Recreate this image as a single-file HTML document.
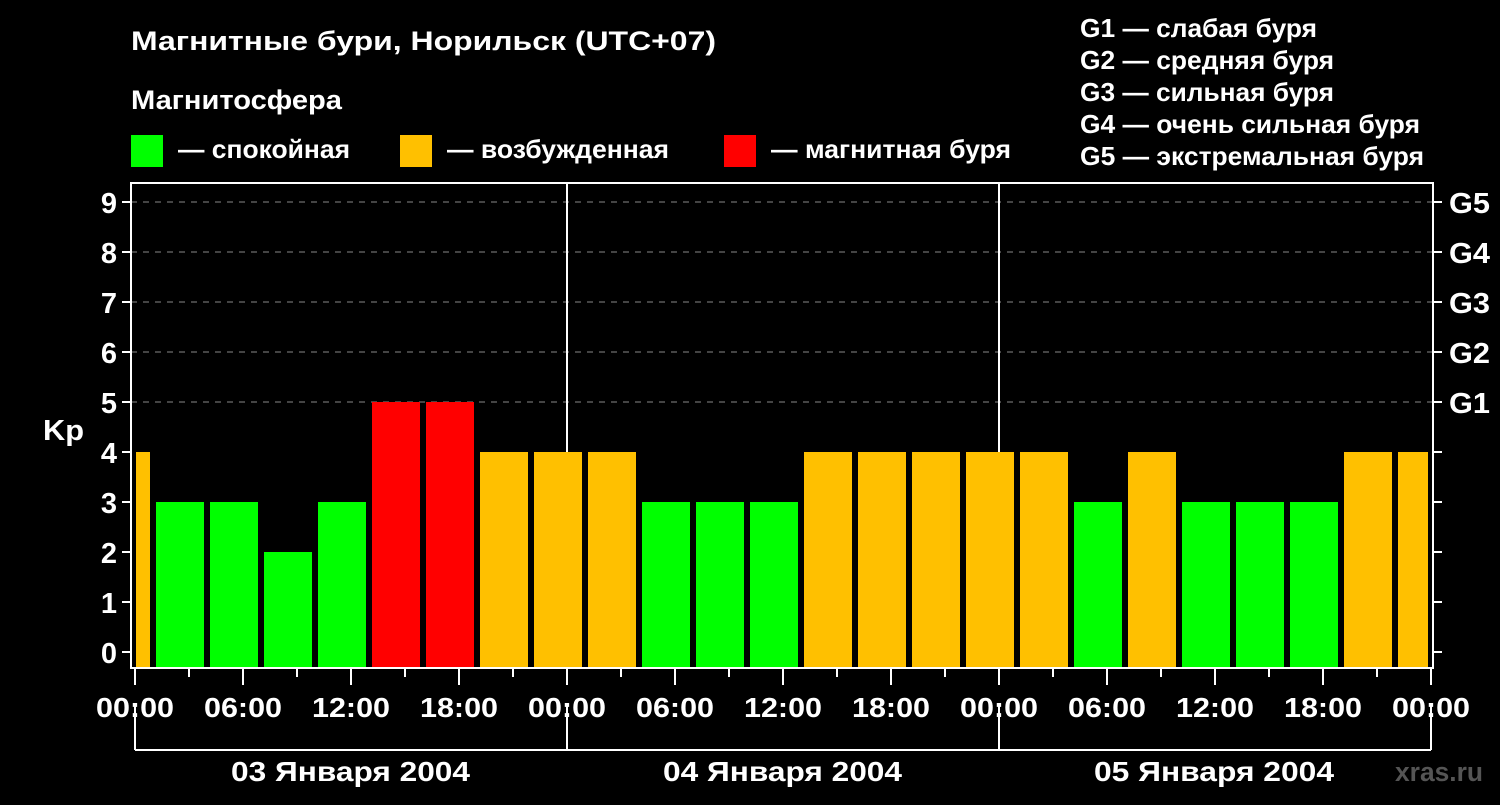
<!DOCTYPE html><html><head><meta charset="utf-8"><style>body{margin:0;background:#000;width:1500px;height:800px;overflow:hidden}</style></head><body>
<svg width="1500" height="800" xmlns="http://www.w3.org/2000/svg" font-family="Liberation Sans, DejaVu Sans, sans-serif" font-weight="bold" fill="#fff">
<rect width="1500" height="800" fill="#000"/>
<text x="131" y="50" font-size="27" textLength="585" lengthAdjust="spacingAndGlyphs">Магнитные бури, Норильск (UTC+07)</text>
<text x="131" y="109" font-size="27" textLength="211" lengthAdjust="spacingAndGlyphs">Магнитосфера</text>
<rect x="131" y="135" width="32" height="32" fill="#00ff00"/><text x="178" y="158" font-size="26" textLength="172" lengthAdjust="spacingAndGlyphs">— спокойная</text>
<rect x="400" y="135" width="32" height="32" fill="#ffc000"/><text x="447" y="158" font-size="26" textLength="222" lengthAdjust="spacingAndGlyphs">— возбужденная</text>
<rect x="724" y="135" width="32" height="32" fill="#ff0000"/><text x="771" y="158" font-size="26" textLength="240" lengthAdjust="spacingAndGlyphs">— магнитная буря</text>
<g font-size="26"><text x="1080" y="37" textLength="237" lengthAdjust="spacingAndGlyphs">G1 — слабая буря</text><text x="1080" y="69" textLength="254" lengthAdjust="spacingAndGlyphs">G2 — средняя буря</text><text x="1080" y="101" textLength="254" lengthAdjust="spacingAndGlyphs">G3 — сильная буря</text><text x="1080" y="133" textLength="340" lengthAdjust="spacingAndGlyphs">G4 — очень сильная буря</text><text x="1080" y="165" textLength="344" lengthAdjust="spacingAndGlyphs">G5 — экстремальная буря</text></g>
<g stroke="#888" stroke-width="1" stroke-dasharray="6,6"><line x1="131" y1="202" x2="1433" y2="202"/><line x1="131" y1="252" x2="1433" y2="252"/><line x1="131" y1="302" x2="1433" y2="302"/><line x1="131" y1="352" x2="1433" y2="352"/><line x1="131" y1="402" x2="1433" y2="402"/></g>
<g stroke="#fff" stroke-width="2"><line x1="567" y1="183" x2="567" y2="668"/><line x1="999" y1="183" x2="999" y2="668"/></g>
<g id="bars"></g>
<g stroke="#fff" stroke-width="2" fill="none"><rect x="131" y="183" width="1302" height="485"/>
<path id="tk" d=""/></g>
<g font-size="29" text-anchor="end" id="yl"></g>
<g font-size="29" id="gl"><text x="1449" y="213" textLength="41" lengthAdjust="spacingAndGlyphs">G5</text><text x="1449" y="263" textLength="41" lengthAdjust="spacingAndGlyphs">G4</text><text x="1449" y="313" textLength="41" lengthAdjust="spacingAndGlyphs">G3</text><text x="1449" y="363" textLength="41" lengthAdjust="spacingAndGlyphs">G2</text><text x="1449" y="413" textLength="41" lengthAdjust="spacingAndGlyphs">G1</text></g>
<text x="43" y="440" font-size="29" textLength="41" lengthAdjust="spacingAndGlyphs">Kp</text>
<g font-size="28" id="xl"></g>
<g font-size="28"><text x="231" y="781" textLength="239" lengthAdjust="spacingAndGlyphs">03 Января 2004</text><text x="663" y="781" textLength="239" lengthAdjust="spacingAndGlyphs">04 Января 2004</text><text x="1094" y="781" textLength="240" lengthAdjust="spacingAndGlyphs">05 Января 2004</text></g>
<text x="1395" y="781" font-size="27" fill="#555" textLength="88" lengthAdjust="spacingAndGlyphs">xras.ru</text>
</svg>
<script>
var ns="http://www.w3.org/2000/svg";
function el(t,a,p,txt){var e=document.createElementNS(ns,t);for(var k in a)e.setAttribute(k,a[k]);if(txt!=null)e.textContent=txt;document.getElementById(p).appendChild(e);return e;}
var c={2:"#00ff00",3:"#00ff00",4:"#ffc000",5:"#ff0000"};
el("rect",{x:136,y:452,width:14,height:216,fill:c[4]},"bars");
var v=[3,3,2,3,5,5,4,4,4,3,3,3,4,4,4,4,4,3,4,3,3,3,4,4];
v.forEach(function(k,i){var x=156+54*i,w=i==23?30:48;el("rect",{x:x,y:652-50*k,width:w,height:668-652+50*k,fill:c[k]},"bars");});
var d="";
for(var i=0;i<=9;i++){var y=652-50*i;d+="M122 "+y+"H131M1433 "+y+"H1442";el("text",{x:117,y:y+11},"yl",""+i);}
for(var i=0;i<=24;i++){var x=135+54*i;d+="M"+x+" 668V"+(i%2?677:685);}
[135,567,999,1431].forEach(function(x){d+="M"+x+" 705V750";});
d+="M135 750H1431";
document.getElementById("tk").setAttribute("d",d);
var L=["00:00","06:00","12:00","18:00"];
for(var i=0;i<=12;i++)el("text",{x:135+108*i-39,y:717,textLength:78,lengthAdjust:"spacingAndGlyphs"},"xl",L[i%4]);
</script>
</body></html>
